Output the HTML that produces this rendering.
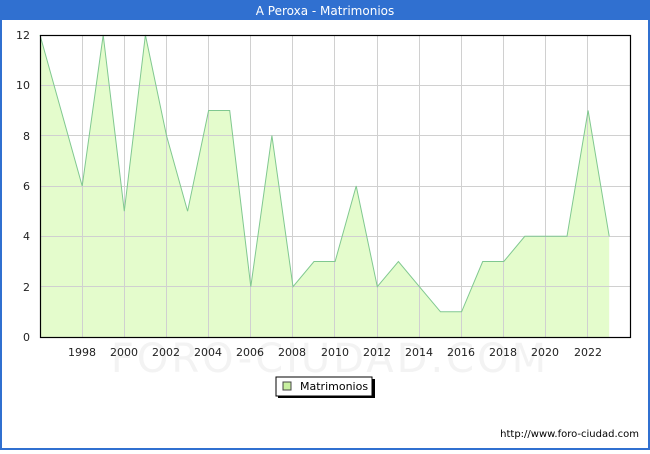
<!DOCTYPE html><html><head><meta charset="utf-8"><style>body{margin:0;width:650px;height:450px;overflow:hidden;font-family:"DejaVu Sans","Liberation Sans",sans-serif}</style></head><body>
<svg width="650" height="450" xmlns="http://www.w3.org/2000/svg" font-family="DejaVu Sans, Liberation Sans, sans-serif">
<rect x="0" y="0" width="650" height="450" fill="#fff"/>
<rect x="1" y="1" width="648" height="448" fill="none" stroke="#3070d0" stroke-width="2"/>
<rect x="0" y="0" width="650" height="20" fill="#3070d0"/>
<text x="325" y="15" fill="#fff" font-size="12" text-anchor="middle">A Peroxa - Matrimonios</text>
<text x="330" y="372" fill="#f3f3f3" font-size="40" text-anchor="middle" letter-spacing="3">FORO-CIUDAD.COM</text>
<polygon fill="#e4fccc" points="40,337 40,35 61.1,110.5 82.2,186 103.2,35 124.3,211.2 145.4,35 166.5,135.6 187.6,211.2 208.6,110.5 229.7,110.5 250.8,286.7 271.9,135.6 293,286.7 314,261.5 335.1,261.5 356.2,186 377.3,286.7 398.4,261.5 419.4,286.7 440.5,311.8 461.6,311.8 482.7,261.5 503.8,261.5 524.8,236.3 545.9,236.3 567,236.3 588.1,110.5 609.2,236.3 609.2,337"/>
<g stroke="#d0d0d0" stroke-width="1">
<line x1="40" x2="630" y1="85.5" y2="85.5"/><line x1="40" x2="630" y1="135.5" y2="135.5"/><line x1="40" x2="630" y1="186.5" y2="186.5"/><line x1="40" x2="630" y1="236.5" y2="236.5"/><line x1="40" x2="630" y1="286.5" y2="286.5"/>
<line x1="82.5" x2="82.5" y1="35" y2="337"/><line x1="124.5" x2="124.5" y1="35" y2="337"/><line x1="166.5" x2="166.5" y1="35" y2="337"/><line x1="208.5" x2="208.5" y1="35" y2="337"/><line x1="250.5" x2="250.5" y1="35" y2="337"/><line x1="292.5" x2="292.5" y1="35" y2="337"/><line x1="334.5" x2="334.5" y1="35" y2="337"/><line x1="377.5" x2="377.5" y1="35" y2="337"/><line x1="419.5" x2="419.5" y1="35" y2="337"/><line x1="461.5" x2="461.5" y1="35" y2="337"/><line x1="503.5" x2="503.5" y1="35" y2="337"/><line x1="545.5" x2="545.5" y1="35" y2="337"/><line x1="587.5" x2="587.5" y1="35" y2="337"/>
</g>
<polyline fill="none" stroke="#80c890" stroke-width="1" points="40,35 61.1,110.5 82.2,186 103.2,35 124.3,211.2 145.4,35 166.5,135.6 187.6,211.2 208.6,110.5 229.7,110.5 250.8,286.7 271.9,135.6 293,286.7 314,261.5 335.1,261.5 356.2,186 377.3,286.7 398.4,261.5 419.4,286.7 440.5,311.8 461.6,311.8 482.7,261.5 503.8,261.5 524.8,236.3 545.9,236.3 567,236.3 588.1,110.5 609.2,236.3"/>
<rect x="40.5" y="35.5" width="590" height="302" fill="none" stroke="#000" stroke-width="1.2"/>
<g font-size="11" fill="#222" text-anchor="end">
<text x="30" y="341">0</text><text x="30" y="291">2</text><text x="30" y="240">4</text><text x="30" y="190">6</text><text x="30" y="140">8</text><text x="30" y="89">10</text><text x="30" y="39">12</text>
</g>
<g font-size="11" fill="#222" text-anchor="middle">
<text x="82" y="356">1998</text><text x="124" y="356">2000</text><text x="166" y="356">2002</text><text x="208" y="356">2004</text><text x="250" y="356">2006</text><text x="292" y="356">2008</text><text x="335" y="356">2010</text><text x="377" y="356">2012</text><text x="419" y="356">2014</text><text x="461" y="356">2016</text><text x="503" y="356">2018</text><text x="545" y="356">2020</text><text x="588" y="356">2022</text>
</g>
<rect x="278" y="379" width="97" height="19" fill="#000"/>
<rect x="276" y="377" width="96" height="19" fill="#fff" stroke="#000" stroke-width="1"/>
<rect x="283" y="382" width="8" height="8" fill="#c8f0a0" stroke="#444" stroke-width="1"/>
<text x="300" y="390" font-size="11" fill="#000">Matrimonios</text>
<text x="639" y="437" font-size="10" fill="#000" text-anchor="end">http://www.foro-ciudad.com</text>
</svg>
</body></html>
